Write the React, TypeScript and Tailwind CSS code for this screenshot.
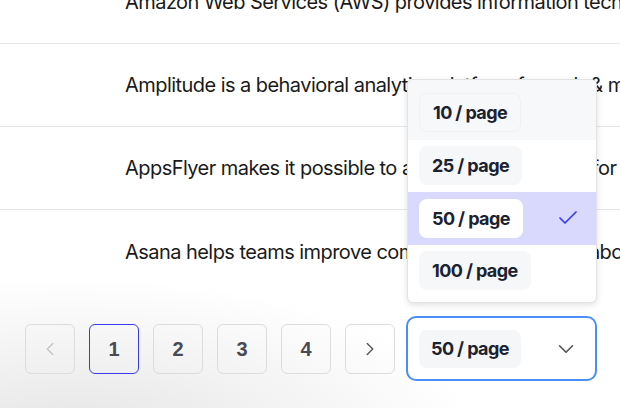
import { Check, ChevronDown, ChevronLeft, ChevronRight } from 'lucide-react'

const rows = [
  'Amazon Web Services (AWS) provides information technology services on demand',
  'Amplitude is a behavioral analytics platform for web & mobile teams',
  'AppsFlyer makes it possible to attribute every install for your apps',
  'Asana helps teams improve communication and collaboration',
]

const sizes = ['10 / page', '25 / page', '50 / page', '100 / page']

export default function App() {
  const current = '50 / page'

  return (
    <div
      className="relative h-[408px] w-[620px] overflow-hidden bg-white bg-[radial-gradient(ellipse_65%_40%_at_12%_108%,#e4e4e4_0%,rgba(255,255,255,0)_100%)]"
      style={{ fontFamily: 'Inter, "Liberation Sans", sans-serif' }}
    >
      {/* rows */}
      <div className="-mt-[39px]">
        {rows.map((text, i) => (
          <div
            key={text}
            className={
              'flex h-[83px] items-center pl-[125px] ' +
              (i < rows.length - 1 ? 'border-b border-[#e6e6e6]' : '')
            }
          >
            <p className="whitespace-nowrap text-[20px] tracking-[-0.55px] text-[#1a1a1a]">{text}</p>
          </div>
        ))}
      </div>

      {/* pagination */}
      <div className="mt-[23px] flex items-center pl-[25px]">
        <div className="flex gap-[14px]">
          <button className="flex h-[50px] w-[50px] items-center justify-center rounded-md border border-[#dcdcdc] text-[#c4c4c4]">
            <ChevronLeft size={22} strokeWidth={1.5} />
          </button>
          {[1, 2, 3, 4].map((n) => (
            <button
              key={n}
              className={
                'flex h-[50px] w-[50px] items-center justify-center rounded-md border text-[20px] font-bold text-[#4a4a52] ' +
                (n === 1 ? 'border-[#3838f0]' : 'border-[#dcdcdc]')
              }
              style={{ fontFamily: '"Liberation Sans", Arial, sans-serif' }}
            >
              {n}
            </button>
          ))}
          <button className="flex h-[50px] w-[50px] items-center justify-center rounded-md border border-[#dcdcdc] text-[#555]">
            <ChevronRight size={22} strokeWidth={1.5} />
          </button>
        </div>

        <div className="relative ml-[11px]">
          <button className="flex h-[65px] w-[191px] items-center justify-between rounded-[10px] border-2 border-[#4a8ff7] bg-white pl-[11px] pr-[16px]">
            <span className="flex h-[38px] items-center rounded-lg bg-[#f5f6f8] px-[12px] text-[18px] font-bold tracking-[-0.6px] text-[#1b2230]">
              {current}
            </span>
            <ChevronDown size={26} strokeWidth={1.5} className="text-[#555]" />
          </button>

          {/* menu */}
          <div className="absolute bottom-[78px] left-[1px] w-[190px] overflow-hidden rounded-md border border-[#e2e2e2] bg-white pb-[5px] shadow-[0_2px_6px_rgba(0,0,0,0.12)]">
            {sizes.map((s, i) => {
              const selected = s === current
              return (
                <div
                  key={s}
                  className={
                    'flex items-center justify-between pl-[11px] pr-[16px] ' +
                    (i === 0 ? 'h-[60px] bg-[#f7f8fa] pt-[6px]' : 'h-[52.5px]') +
                    (selected ? ' bg-[#d9d9fd]' : '')
                  }
                >
                  <span
                    className={
                      'flex h-[39px] items-center rounded-lg px-[13px] text-[18px] font-bold tracking-[-0.6px] text-[#1b2230] ' +
                      (selected ? 'bg-white' : i === 0 ? 'border border-[#f0f1f3] bg-[#f7f8fa]' : 'bg-[#f6f7f9]')
                    }
                  >
                    {s}
                  </span>
                  {selected && <Check size={24} strokeWidth={1.7} className="text-[#3a3af0]" />}
                </div>
              )
            })}
          </div>
        </div>
      </div>
    </div>
  )
}
